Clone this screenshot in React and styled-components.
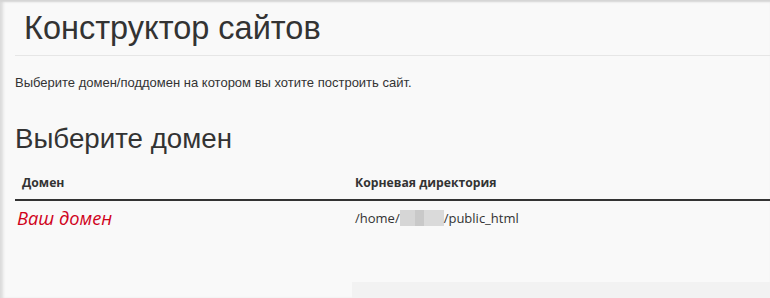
import React from "react";
import styled, { createGlobalStyle } from "styled-components";

const Global = createGlobalStyle`
  html, body { margin: 0; padding: 0; background: #f9f9f9; }
  body { font-family: "Open Sans", "Liberation Sans", Arial, sans-serif; color: #333; }
`;

const Page = styled.div`
  position: relative;
  width: 770px;
  height: 298px;
  overflow: hidden;
  background: #f9f9f9;
  box-shadow: inset 0 3px 2px -1px #d4d4d4, inset 4px 0 3px -1px #dcdcdc;
  padding: 0 0 0 15px;
  box-sizing: border-box;
`;

const TitleBar = styled.div`
  border-bottom: 1px solid #e6e6e6;
  padding: 9px 0 8px 9px;
`;

const Title = styled.h1`
  margin: 0;
  font-family: "Liberation Sans", Arial, sans-serif;
  font-weight: 400;
  font-size: 32.5px;
  line-height: 38px;
  color: #333;
`;

const Intro = styled.p`
  margin: 18px 0 0;
  font-family: "Liberation Sans", Arial, sans-serif;
  font-size: 13px;
  line-height: 18px;
  color: #333;
`;

const Subtitle = styled.h2`
  margin: 31px 0 0;
  font-family: "Liberation Sans", Arial, sans-serif;
  font-weight: 400;
  font-size: 27.7px;
  line-height: 32px;
  color: #333;
`;

const Table = styled.div`
  margin-top: 10px;
`;

const HeadRow = styled.div`
  display: grid;
  grid-template-columns: 333px 1fr;
  border-bottom: 2px solid #333;
  height: 34px;
  align-items: center;
`;

const HeadCell = styled.div`
  padding-left: ${(p) => p.$pad}px;
  font-weight: 700;
  font-size: 12.2px;
  color: #333;
`;

const Row = styled.div`
  display: grid;
  grid-template-columns: 333px 1fr;
  height: 33px;
  align-items: center;
`;

const DomainLink = styled.a`
  padding-left: 2px;
  font-style: italic;
  font-size: 18.3px;
  color: #d0021b;
  text-decoration: none;
  position: relative;
`;

const Blur = styled.span`
  position: absolute;
  top: 3px;
  left: 14px;
  width: 44px;
  height: 19px;
  background: linear-gradient(90deg, rgba(200,215,235,0.0) 0 12%, rgba(200,215,235,0.35) 12% 40%, rgba(200,215,235,0.2) 40% 60%, rgba(200,215,235,0.35) 60% 100%);
  z-index: -1;
`;

const PathCell = styled.div`
  padding-left: 7px;
  font-size: 13px;
  color: #333;
  display: flex;
  align-items: center;
`;

const Masked = styled.span`
  display: inline-block;
  width: 44px;
  height: 16px;
  background: linear-gradient(90deg, #d6d6d6 0 35%, #c9c9c9 35% 55%, #dadada 55% 100%);
`;

const Footer = styled.div`
  position: absolute;
  left: 352px;
  right: 0;
  bottom: 0;
  height: 16px;
  background: #f2f2f2;
`;

export default function App() {
  return (
    <>
      <Global />
      <Page>
        <TitleBar>
          <Title>Конструктор сайтов</Title>
        </TitleBar>
        <Intro>Выберите домен/поддомен на котором вы хотите построить сайт.</Intro>
        <Subtitle>Выберите домен</Subtitle>
        <Table>
          <HeadRow>
            <HeadCell $pad={7}>Домен</HeadCell>
            <HeadCell $pad={7}>Корневая директория</HeadCell>
          </HeadRow>
          <Row>
            <DomainLink href="#">
              <Blur />
              Ваш домен
            </DomainLink>
            <PathCell>
              /home/<Masked />/public_html
            </PathCell>
          </Row>
        </Table>
        <Footer />
      </Page>
    </>
  );
}
